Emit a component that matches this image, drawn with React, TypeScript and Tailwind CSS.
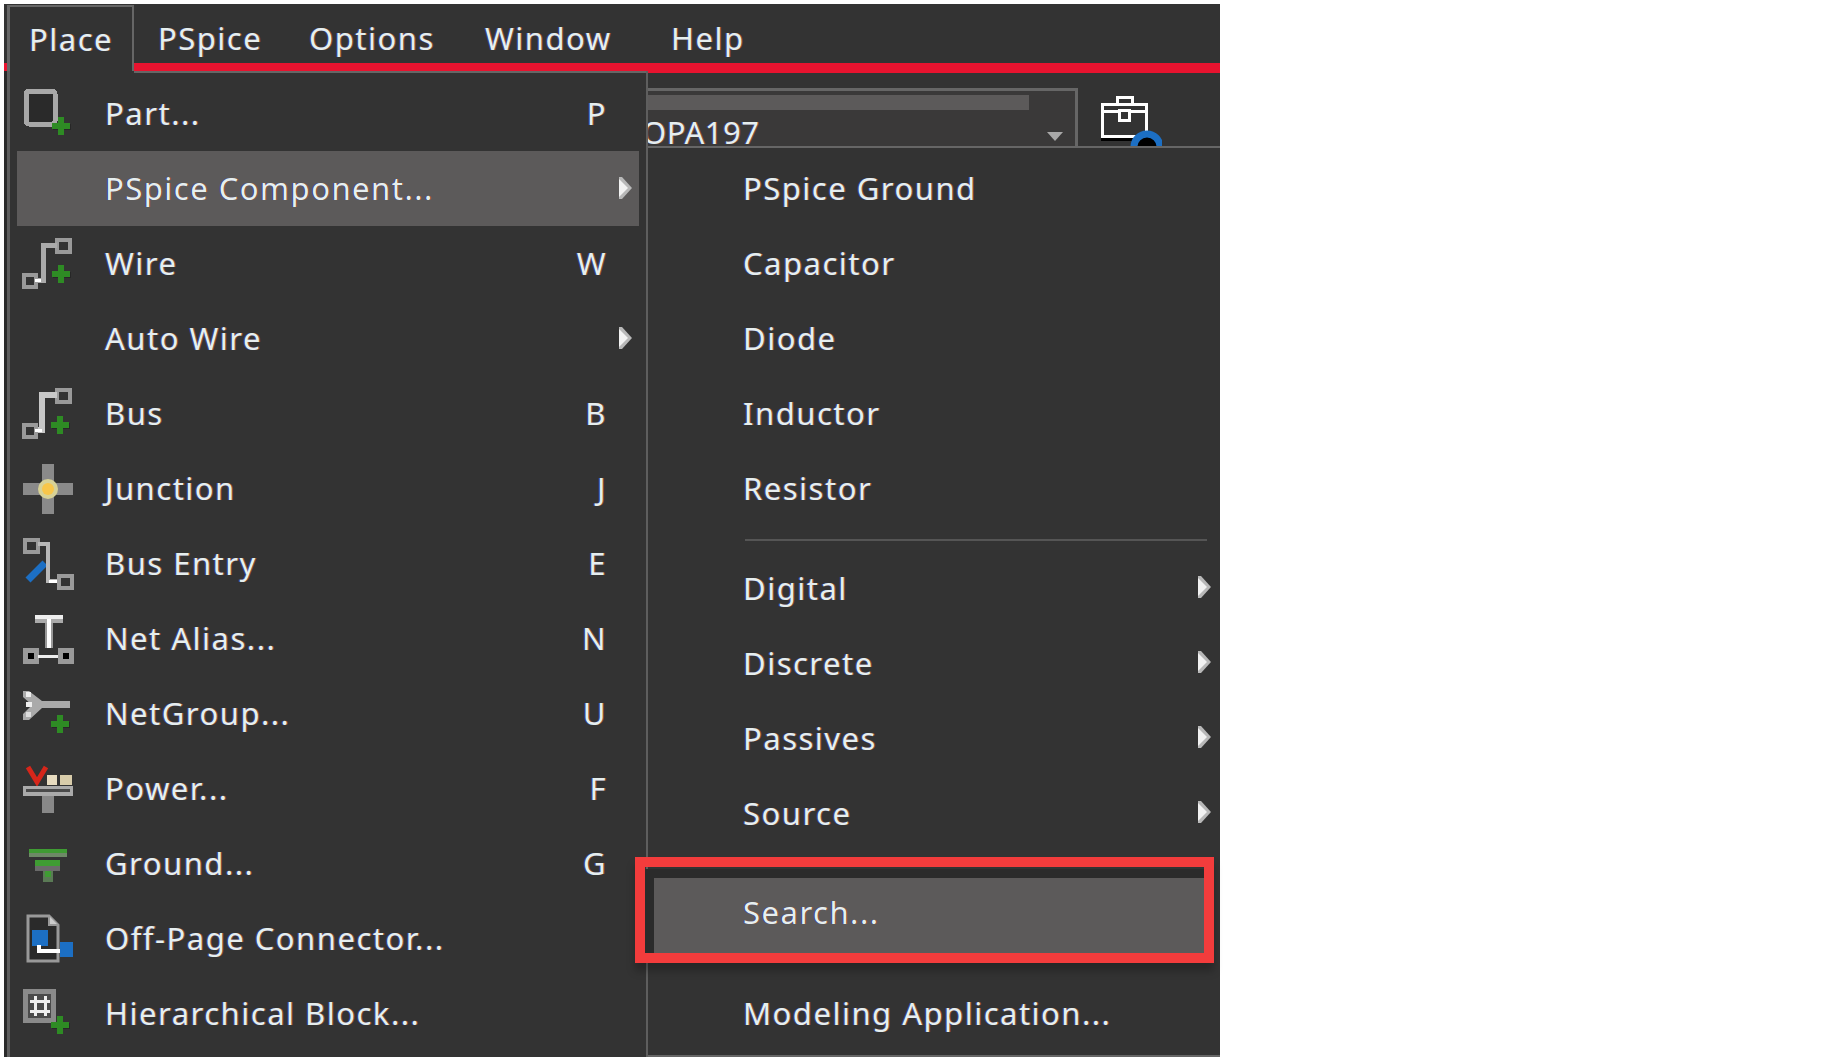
import React from "react";

const G = "#9a9a9a";
const GREEN = "#2e8b24";

const Plus = ({ x = 40, y = 36 }: { x?: number; y?: number }) => (
  <g>
    <rect x={x - 8} y={y - 2} width={18} height={6} fill="#1c1c1c" opacity={0.5} />
    <rect x={x - 9} y={y - 3} width={18} height={6} fill={GREEN} />
    <rect x={x - 3} y={y - 9} width={6} height={18} fill={GREEN} />
  </g>
);

const Box = ({ x, y, w = 13, h = 12, fill = "none", sw = 4 }: { x: number; y: number; w?: number; h?: number; fill?: string; sw?: number }) => (
  <rect x={x} y={y} width={w} height={h} fill={fill} stroke={G} strokeWidth={sw} />
);

const Icon = ({ children }: { children?: React.ReactNode }) => (
  <svg width="56" height="52" viewBox="0 0 56 52" className="block overflow-visible" shapeRendering="crispEdges">
    {children}
  </svg>
);

const icons: Record<string, React.ReactNode> = {
  part: (
    <Icon>
      <rect x="6" y="3" width="29" height="33" rx="3" fill="#2a2a2a" stroke="#a8a8a8" strokeWidth="5" />
      <Plus x={41} y={38} />
    </Icon>
  ),
  wire: (
    <Icon>
      <Box x={37} y={2} />
      <path d="M37 7H23V42H15" fill="none" stroke="#aaa" strokeWidth="5" />
      <Box x={4} y={37} w={12} />
      <path d="M15 42H21" stroke="#fff" strokeWidth="3" />
      <Plus x={41} y={36} />
    </Icon>
  ),
  bus: (
    <Icon>
      <Box x={37} y={2} />
      <path d="M37 7H22V42H15" fill="none" stroke="#c8c8c8" strokeWidth="6" />
      <Box x={4} y={37} w={12} />
      <path d="M15 42H22" stroke="#fff" strokeWidth="3" />
      <Plus x={40} y={37} />
    </Icon>
  ),
  junction: (
    <Icon>
      <rect x="3" y="20" width="50" height="12" fill="#8a8a8a" />
      <rect x="22" y="1" width="12" height="50" fill="#8a8a8a" />
      <circle cx="28" cy="26" r="10" fill="#d8d296" shapeRendering="auto" />
      <circle cx="28" cy="26" r="6" fill="#f8c64a" shapeRendering="auto" />
    </Icon>
  ),
  entry: (
    <Icon>
      <path d="M8 42L25 25" stroke="#1c6fc4" strokeWidth="7" shapeRendering="auto" />
      <Box x={5} y={2} w={13} />
      <path d="M18 6H28V43H38" fill="none" stroke="#b8b8b8" strokeWidth="4" />
      <path d="M29 43H38" stroke="#fff" strokeWidth="3" />
      <Box x={39} y={38} />
    </Icon>
  ),
  alias: (
    <Icon>
      <rect x="15" y="2" width="28" height="8" fill="#aaa" />
      <rect x="15" y="2" width="28" height="4" fill="#eee" />
      <rect x="25" y="10" width="8" height="25" fill="#999" />
      <rect x="27" y="6" width="4" height="29" fill="#fff" />
      <Box x={5} y={37} w={11} h={11} fill="#000" sw={5} />
      <Box x={40} y={37} w={11} h={11} fill="#000" sw={5} />
      <path d="M18 43H38" stroke="#eee" strokeWidth="3" />
    </Icon>
  ),
  netgroup: (
    <Icon>
      <path d="M3 3H9L22 13H50V20H22L9 32H3V26L12 17L3 9Z" fill="#aaa" shapeRendering="auto" />
      <rect x="6" y="4" width="5" height="5" fill="#eee" />
      <rect x="6" y="14" width="6" height="5" fill="#eee" />
      <rect x="6" y="24" width="5" height="5" fill="#ddd" />
      <Plus x={40} y={36} />
    </Icon>
  ),
  power: (
    <Icon>
      <path d="M8 4L17 19L26 4" fill="none" stroke="#d6261a" strokeWidth="5" shapeRendering="auto" />
      <rect x="27" y="12" width="10" height="10" fill="#e8dcc0" />
      <rect x="40" y="12" width="12" height="10" fill="#d8ccaa" />
      <rect x="3" y="23" width="50" height="10" fill="#aaa" />
      <rect x="6" y="26" width="44" height="3" fill="#4a4a4a" />
      <rect x="22" y="33" width="12" height="17" fill="#888" />
    </Icon>
  ),
  ground: (
    <Icon>
      <rect x="9" y="11" width="38" height="4" fill="#3f9c33" />
      <rect x="9" y="15" width="38" height="4" fill="#6d8a66" />
      <rect x="15" y="22" width="25" height="6" fill="#3f9c33" />
      <rect x="15" y="28" width="25" height="5" fill="#6a6a6a" />
      <rect x="23" y="33" width="10" height="11" fill="#5a7a55" />
      <rect x="25" y="33" width="6" height="6" fill="#3f9c33" />
    </Icon>
  ),
  offpage: (
    <Icon>
      <path d="M8 3H29L38 12V48H8Z" fill="#2a2a2a" stroke="#999" strokeWidth="3" shapeRendering="auto" />
      <path d="M29 3V12H38" fill="#ccc" stroke="#999" strokeWidth="2" shapeRendering="auto" />
      <rect x="12" y="17" width="16" height="16" fill="#1c6fc4" />
      <rect x="40" y="29" width="13" height="15" fill="#1c6fc4" />
      <path d="M19 32V38H40" fill="none" stroke="#fff" strokeWidth="4" />
    </Icon>
  ),
  block: (
    <Icon>
      <rect x="5" y="3" width="28" height="29" fill="#4a4a4a" stroke="#8a8a8a" strokeWidth="5" />
      <path d="M10 13H30M10 23H30M15 8V28M25 8V28" stroke="#eee" strokeWidth="3" />
      <Plus x={40} y={37} />
    </Icon>
  ),
};

const Arrow = () => (
  <svg width="13" height="22" viewBox="0 0 13 22" className="block">
    <path d="M0 0H3L13 11L3 22H0Z" fill="#b8b8b8" />
    <path d="M0 2L9 11L0 20Z" fill="#f2f2f2" />
  </svg>
);

const text =
  "text-[31px] leading-none tracking-[1.5px] text-[#e6eeee] [text-shadow:-1px_0_#34408a,1px_0_#8a4f2c] whitespace-nowrap";

const mainItems: { icon?: string; label: string; key?: string; arrow?: boolean; active?: boolean }[] = [
  { icon: "part", label: "Part...", key: "P" },
  { label: "PSpice Component...", arrow: true, active: true },
  { icon: "wire", label: "Wire", key: "W" },
  { label: "Auto Wire", arrow: true },
  { icon: "bus", label: "Bus", key: "B" },
  { icon: "junction", label: "Junction", key: "J" },
  { icon: "entry", label: "Bus Entry", key: "E" },
  { icon: "alias", label: "Net Alias...", key: "N" },
  { icon: "netgroup", label: "NetGroup...", key: "U" },
  { icon: "power", label: "Power...", key: "F" },
  { icon: "ground", label: "Ground...", key: "G" },
  { icon: "offpage", label: "Off-Page Connector..." },
  { icon: "block", label: "Hierarchical Block..." },
];

const SubRow = ({ label, arrow }: { label: string; arrow?: boolean }) => (
  <div className="flex h-[75px] items-center justify-between pl-[95px] pr-[9px]">
    <span className={text}>{label}</span>
    {arrow && (
      <div className="-mt-[4px]">
        <Arrow />
      </div>
    )}
  </div>
);

export default function App() {
  return (
    <div className="h-[1060px] w-[1835px] bg-white pl-[4px] pt-[4px] font-['Noto_Sans','Open_Sans',sans-serif]">
      <div className="flex h-[1053px] w-[1216px] flex-col bg-[#333333]">
        {/* menu bar */}
        <div className="flex h-[67px] shrink-0">
          <div className="mt-[59px] h-[8px] w-[3px] bg-[#e8132f]" />
          <div className="mt-[1px] flex h-[66px] w-[127px] items-start border-l-[3px] border-r-2 border-t-2 border-[#666666] pl-[19px] pt-[17px]">
            <span className={text}>Place</span>
          </div>
          <div className="flex flex-1 flex-col">
            <div className="flex h-[59px] items-start pt-[19px]">
              <div className="w-[175px] pl-[24px]"><span className={text}>PSpice</span></div>
              <div className="w-[176px]"><span className={text}>Options</span></div>
              <div className="w-[186px]"><span className={text}>Window</span></div>
              <div><span className={text}>Help</span></div>
            </div>
            <div className="h-[8px] bg-[#e8132f]" />
          </div>
        </div>

        <div className="flex min-h-0 flex-1">
          <div className="w-[3px] shrink-0 bg-[#2a2a2a]" />
          {/* Place menu */}
          <div className="flex h-full w-[641px] shrink-0 flex-col border-l-[3px] border-r-2 border-[#5e5e5e]">
            <div className="flex h-[2px] shrink-0">
              <div className="w-[124px]" />
              <div className="flex-1 bg-[#666666]" />
            </div>
            <div className="flex flex-col pl-[7px] pr-[7px] pt-[3px]">
              {mainItems.map((it) => (
                <div
                  key={it.label}
                  className={`flex h-[75px] items-center ${it.active ? "bg-[#5c5a5a]" : ""}`}
                >
                  <div className="w-[88px] shrink-0 pl-[3px]">{it.icon ? icons[it.icon] : null}</div>
                  <span className={`${text} flex-1`}>{it.label}</span>
                  {it.key && <span className={`${text} mr-[32px]`}>{it.key}</span>}
                  {it.arrow && (
                    <div className="-mt-[2px] mr-[7px]">
                      <Arrow />
                    </div>
                  )}
                </div>
              ))}
            </div>
          </div>

          {/* right side */}
          <div className="flex min-w-0 flex-1 flex-col">
            <div className="h-[2px] shrink-0 bg-[#e8132f]" />
            <div className="flex h-[73px] shrink-0 items-end overflow-hidden">
              <div className="relative h-[58px] w-[430px] shrink-0 overflow-hidden border-r-[3px] border-t-[3px] border-[#666666] bg-[#3a3939]">
                <div className="mt-[4px] h-[15px] w-[381px] bg-[#5c5a5a]" />
                <div className="ml-[-6px] mt-[7px] whitespace-nowrap text-[31px] leading-none tracking-[0.5px] text-[#e6eeee] [text-shadow:-1px_0_#34408a,1px_0_#8a4f2c]">OPA197</div>
                <svg width="16" height="9" viewBox="0 0 16 9" className="absolute right-[12px] top-[41px]">
                  <path d="M0 0H16L8 9Z" fill="#a8a8a8" />
                </svg>
              </div>
              <svg width="64" height="52" viewBox="0 0 64 52" className="ml-[20px] block" shapeRendering="crispEdges">
                <path d="M19.5 10.5V3.5H34.5V10.5" fill="none" stroke="#fff" strokeWidth="3" />
                <rect x="4.5" y="10.5" width="44" height="32" fill="none" stroke="#fff" strokeWidth="3" />
                <path d="M4 17.5H49" stroke="#fff" strokeWidth="3" />
                <rect x="21.5" y="16.5" width="10" height="10" fill="#333" stroke="#fff" strokeWidth="3" />
                <rect x="3" y="44" width="32" height="3" fill="#000" />
                <circle cx="49" cy="53" r="13" fill="#000" stroke="#1c6fc4" strokeWidth="7" shapeRendering="auto" />
              </svg>
            </div>

            {/* submenu */}
            <div className="flex flex-1 flex-col border-y-2 border-[#666666] pt-[3px]">
              <SubRow label="PSpice Ground" />
              <SubRow label="Capacitor" />
              <SubRow label="Diode" />
              <SubRow label="Inductor" />
              <SubRow label="Resistor" />
              <div className="ml-[97px] mr-[13px] mt-[13px] h-[2px] bg-[#555555]" />
              <div className="mb-[1px] mt-[10px]">
                <SubRow label="Digital" arrow />
                <SubRow label="Discrete" arrow />
                <SubRow label="Passives" arrow />
                <SubRow label="Source" arrow />
              </div>
              <div className="relative mx-[6px] mt-[26px] flex h-[75px] w-[550px] items-center bg-[#5c5a5a] pl-[89px] shadow-[0_0_0_9px_#2b2b2b]">
                <span className={`${text} -mt-[6px]`}>Search...</span>
                <div className="absolute -bottom-[10px] -left-[19px] -right-[10px] -top-[21px] border-[10px] border-[#f33c3c] shadow-[0_8px_8px_rgba(0,0,0,0.25)]" />
              </div>
              <div className="mt-[23px]">
                <SubRow label="Modeling Application..." />
              </div>
            </div>
          </div>
        </div>
      </div>
    </div>
  );
}
